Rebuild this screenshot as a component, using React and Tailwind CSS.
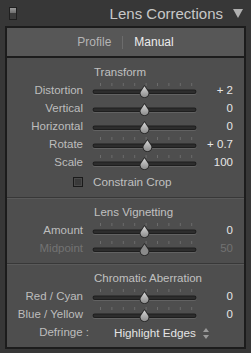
const FONT = { fontFamily: '"Liberation Sans", Arial, sans-serif' };

const Slider = ({ pos = 0.5, ticks = true, dim = false }) => {
  // pos: 0..1 across the 105px track
  const x = 4 + pos * 97;
  const tickXs = [8, 19.4, 30.8, 42.2, 53.6, 65, 76.4, 87.8, 99.2];
  return (
    <svg width="105" height="18" viewBox="0 0 105 18" className="block">
      {ticks &&
        tickXs.map((t) => (
          <rect key={t} x={t} y="1" width="1" height="3" fill="#6c6c6c" />
        ))}
      <rect x="0.5" y="8" width="104" height="5" rx="2.5" fill="#626262" />
      <rect x="0.5" y="7.5" width="104" height="4.5" rx="2.25" fill="#1e1e1e" />
      <rect x="1.5" y="8.5" width="102" height="2.5" rx="1.25" fill="#2d2d2d" />
      <g transform={`translate(${x - 5.5} 3)`}>
        <path d="M5.5 0 L10.2 6.6 A4.9 4.9 0 1 1 0.8 6.6 Z" fill="#262626" />
        <path
          d="M5.5 1.2 L9.3 6.9 A4 4 0 1 1 1.7 6.9 Z"
          fill={dim ? "#8a8a8a" : "url(#thumbGrad)"}
        />
      </g>
    </svg>
  );
};

const Row = ({ label, value, pos, ticks = true, dim = false }) => (
  <div className="flex items-center h-[18px]">
    <div
      className={`w-[76px] text-right text-[11.5px] leading-none ${
        dim ? "text-[#737373]" : "text-[#bdbdbd]"
      }`}
    >
      {label}
    </div>
    <div className="ml-[9px]">
      <Slider pos={pos} ticks={ticks} dim={dim} />
    </div>
    <div
      className={`flex-1 text-right pr-[11px] text-[11.5px] leading-none ${
        dim ? "text-[#727272]" : "text-[#e6e6e6]"
      }`}
    >
      {value}
    </div>
  </div>
);

const Heading = ({ children }) => (
  <div className="h-[18px] flex items-center pl-[87px] text-[11.5px] leading-none text-[#c0c0c0]">
    {children}
  </div>
);

const Separator = () => (
  <div>
    <div className="h-px bg-[#383838]" />
    <div className="h-px bg-[#5a5a5a]" />
  </div>
);

export default function App() {
  return (
    <div
      className="w-[251px] h-[353px] bg-[#373737] overflow-hidden flex flex-col"
      style={FONT}
    >
      <svg width="0" height="0" className="absolute">
        <defs>
          <linearGradient id="thumbGrad" x1="0" y1="0" x2="0" y2="1">
            <stop offset="0" stopColor="#d6d6d6" />
            <stop offset="1" stopColor="#8c8c8c" />
          </linearGradient>
        </defs>
      </svg>

      {/* Header */}
      <div className="h-[26px] flex items-center pl-[9px] pr-[8px]">
        <div className="w-[8px] h-[13px] border border-[#1f1f1f] flex flex-col">
          <div className="flex-1 bg-gradient-to-b from-[#9a9a9a] to-[#6e6e6e]" />
          <div className="flex-1 bg-[#3c3c3c]" />
        </div>
        <div className="ml-auto text-[15px] leading-none text-[#c8c8c8]">
          Lens Corrections
        </div>
        <svg width="10" height="9" viewBox="0 0 10 9" className="ml-[10px]">
          <path d="M0 0 H10 L5 9 Z" fill="#b0b0b0" />
        </svg>
      </div>

      {/* Panel */}
      <div className="ml-[5px] mr-[5px] border-2 border-[#1c1c1c] bg-[#4e4e4e] flex flex-col h-[323px]">
        {/* Tabs */}
        <div className="h-[28px] bg-[#575757] border-b-2 border-[#1c1c1c] box-content flex items-center justify-center gap-[11px] text-[12px] leading-none">
          <span className="text-[#b4b4b4]">Profile</span>
          <span className="w-px h-[13px] bg-[#6c6c6c]" />
          <span className="text-[#ececec]">Manual</span>
        </div>

        {/* Transform */}
        <div className="pt-[6px] pb-[6px]">
          <Heading>Transform</Heading>
          <Row label="Distortion" value="+ 2" pos={0.5} />
          <Row label="Vertical" value="0" pos={0.5} ticks={false} />
          <Row label="Horizontal" value="0" pos={0.5} ticks={false} />
          <Row label="Rotate" value="+ 0.7" pos={0.53} />
          <Row label="Scale" value="100" pos={0.5} />
          <div className="h-[18px] flex items-center mt-px">
            <div className="ml-[66px] w-[10px] h-[10px] border border-[#1a1a1a] bg-[#3a3a3a] shadow-[inset_0_0_0_1px_#4a4a4a]" />
            <span className="ml-[10px] text-[11.7px] leading-none text-[#c0c0c0]">
              Constrain Crop
            </span>
          </div>
        </div>

        <Separator />

        {/* Lens Vignetting */}
        <div className="pt-[5px] pb-[5px]">
          <Heading>Lens Vignetting</Heading>
          <Row label="Amount" value="0" pos={0.5} />
          <Row label="Midpoint" value="50" pos={0.5} dim />
        </div>

        <Separator />

        {/* Chromatic Aberration */}
        <div className="pt-[5px]">
          <Heading>Chromatic Aberration</Heading>
          <Row label="Red / Cyan" value="0" pos={0.5} />
          <Row label="Blue / Yellow" value="0" pos={0.5} />
          <div className="h-[18px] flex items-center">
            <div className="w-[82px] text-right text-[11.5px] leading-none text-[#bdbdbd]">
              Defringe :
            </div>
            <span className="ml-[25px] text-[11.7px] leading-none text-[#e4e4e4]">
              Highlight Edges
            </span>
            <svg width="6" height="11" viewBox="0 0 6 11" className="ml-[7px]">
              <path d="M3 0 L6 4 H0 Z" fill="#9a9a9a" />
              <path d="M3 11 L6 7 H0 Z" fill="#9a9a9a" />
            </svg>
          </div>
        </div>
      </div>
    </div>
  );
}
